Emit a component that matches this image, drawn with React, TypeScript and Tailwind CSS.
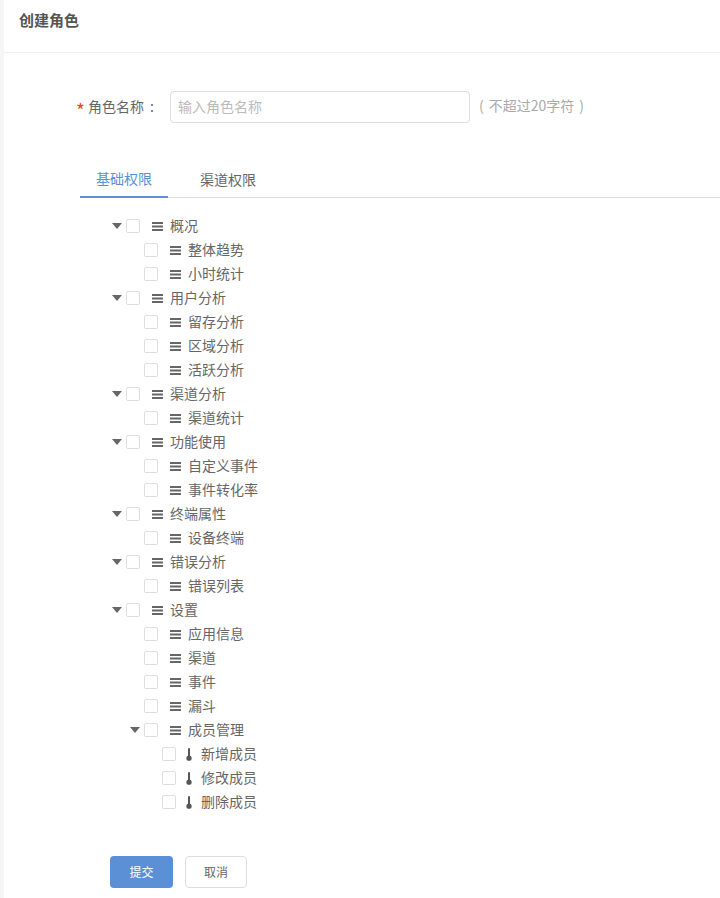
type TreeNode = {
  label: string;
  children?: TreeNode[];
};

const TREE: TreeNode[] = [
  { label: "概况", children: [{ label: "整体趋势" }, { label: "小时统计" }] },
  { label: "用户分析", children: [{ label: "留存分析" }, { label: "区域分析" }, { label: "活跃分析" }] },
  { label: "渠道分析", children: [{ label: "渠道统计" }] },
  { label: "功能使用", children: [{ label: "自定义事件" }, { label: "事件转化率" }] },
  { label: "终端属性", children: [{ label: "设备终端" }] },
  { label: "错误分析", children: [{ label: "错误列表" }] },
  {
    label: "设置",
    children: [
      { label: "应用信息" },
      { label: "渠道" },
      { label: "事件" },
      { label: "漏斗" },
      {
        label: "成员管理",
        children: [{ label: "新增成员" }, { label: "修改成员" }, { label: "删除成员" }],
      },
    ],
  },
];

function MenuIcon() {
  return (
    <svg width="11" height="9" viewBox="0 0 11 9" className="shrink-0" fill="#666666">
      <rect x="0" y="0" width="11" height="2" />
      <rect x="0" y="3.5" width="11" height="2" />
      <rect x="0" y="7" width="11" height="2" />
    </svg>
  );
}

function PinIcon() {
  return (
    <svg width="6" height="13" viewBox="0 0 6 13" className="shrink-0" fill="#555555">
      <rect x="2" y="0" width="2" height="9" rx="1" />
      <circle cx="3" cy="10.2" r="2.6" />
    </svg>
  );
}

function Row({ node, depth }: { node: TreeNode; depth: number }) {
  const expanded = Boolean(node.children);
  return (
    <>
      <div className="flex h-6 items-center" style={{ paddingLeft: depth * 18 }}>
        <span className="flex w-[14px] shrink-0 justify-start">
          {expanded ? (
            <span className="h-0 w-0 border-x-[5px] border-t-[6px] border-x-transparent border-t-[#666666]" />
          ) : null}
        </span>
        <span className="h-[14px] w-[14px] shrink-0 rounded-[2px] border border-[#dddddd] bg-white" />
        {depth === 2 ? (
          <span className="ml-[10px] flex items-center">
            <PinIcon />
          </span>
        ) : (
          <span className="ml-3 flex items-center">
            <MenuIcon />
          </span>
        )}
        <span className={`-mt-[2px] ${depth === 2 ? "ml-[9px]" : "ml-[7px]"}`}>{node.label}</span>
      </div>
      {node.children?.map((child) => (
        <Row key={child.label} node={child} depth={depth + 1} />
      ))}
    </>
  );
}

export default function App() {
  return (
    <div
      className="h-[898px] overflow-hidden bg-[#f5f5f5] pl-1 text-[14px] text-[#666666]"
      style={{ fontFamily: '"Noto Sans CJK SC", "Liberation Sans", sans-serif' }}
    >
      <div className="h-full bg-white">
        <div className="flex h-[53px] items-start border-b border-[#eeeeee] pl-[15px] pt-[10px]">
          <h1 className="text-[15px] leading-5 font-bold text-[#555555]">创建角色</h1>
        </div>

        <div className="mt-[38px] flex h-8 items-center pl-[72px]">
          <span className="mt-[4px] w-[12px] text-[19px] leading-none text-[#e8471c]">*</span>
          <label className="-mt-[2px] w-[82px]">
            角色名称<span className="ml-[6px]">:</span>
          </label>
          <input
            placeholder="输入角色名称"
            className="h-8 w-[300px] rounded border border-[#dddddd] px-[7px] pb-[3px] text-[14px] outline-none placeholder:text-[#bbbbbb]"
          />
          <span className="-mt-[3px] ml-[9px] flex text-[#aaaaaa]">
            <span>(</span>
            <span className="mx-[5px]">不超过20字符</span>
            <span>)</span>
          </span>
        </div>

        <div className="mt-[32px] ml-[76px] flex h-[43px] items-end border-b border-[#dddddd]">
          <span className="-mb-px flex h-[43px] w-[88px] items-center justify-center border-b-2 border-[#5b8fd6] pt-[5px] text-[#5b8fd6]">
            基础权限
          </span>
          <span className="-mb-px ml-4 flex h-[43px] w-[88px] items-center justify-center pt-[5px]">渠道权限</span>
        </div>

        <div className="mt-4 pl-[108px]">
          {TREE.map((node) => (
            <Row key={node.label} node={node} depth={0} />
          ))}
        </div>

        <div className="mt-[42px] flex gap-3 pl-[106px]">
          <button className="h-8 w-[63px] rounded bg-[#5b8fd6] text-xs text-white">提交</button>
          <button className="h-8 w-[62px] rounded border border-[#dddddd] bg-white text-xs text-[#666666]">
            取消
          </button>
        </div>
      </div>
    </div>
  );
}
